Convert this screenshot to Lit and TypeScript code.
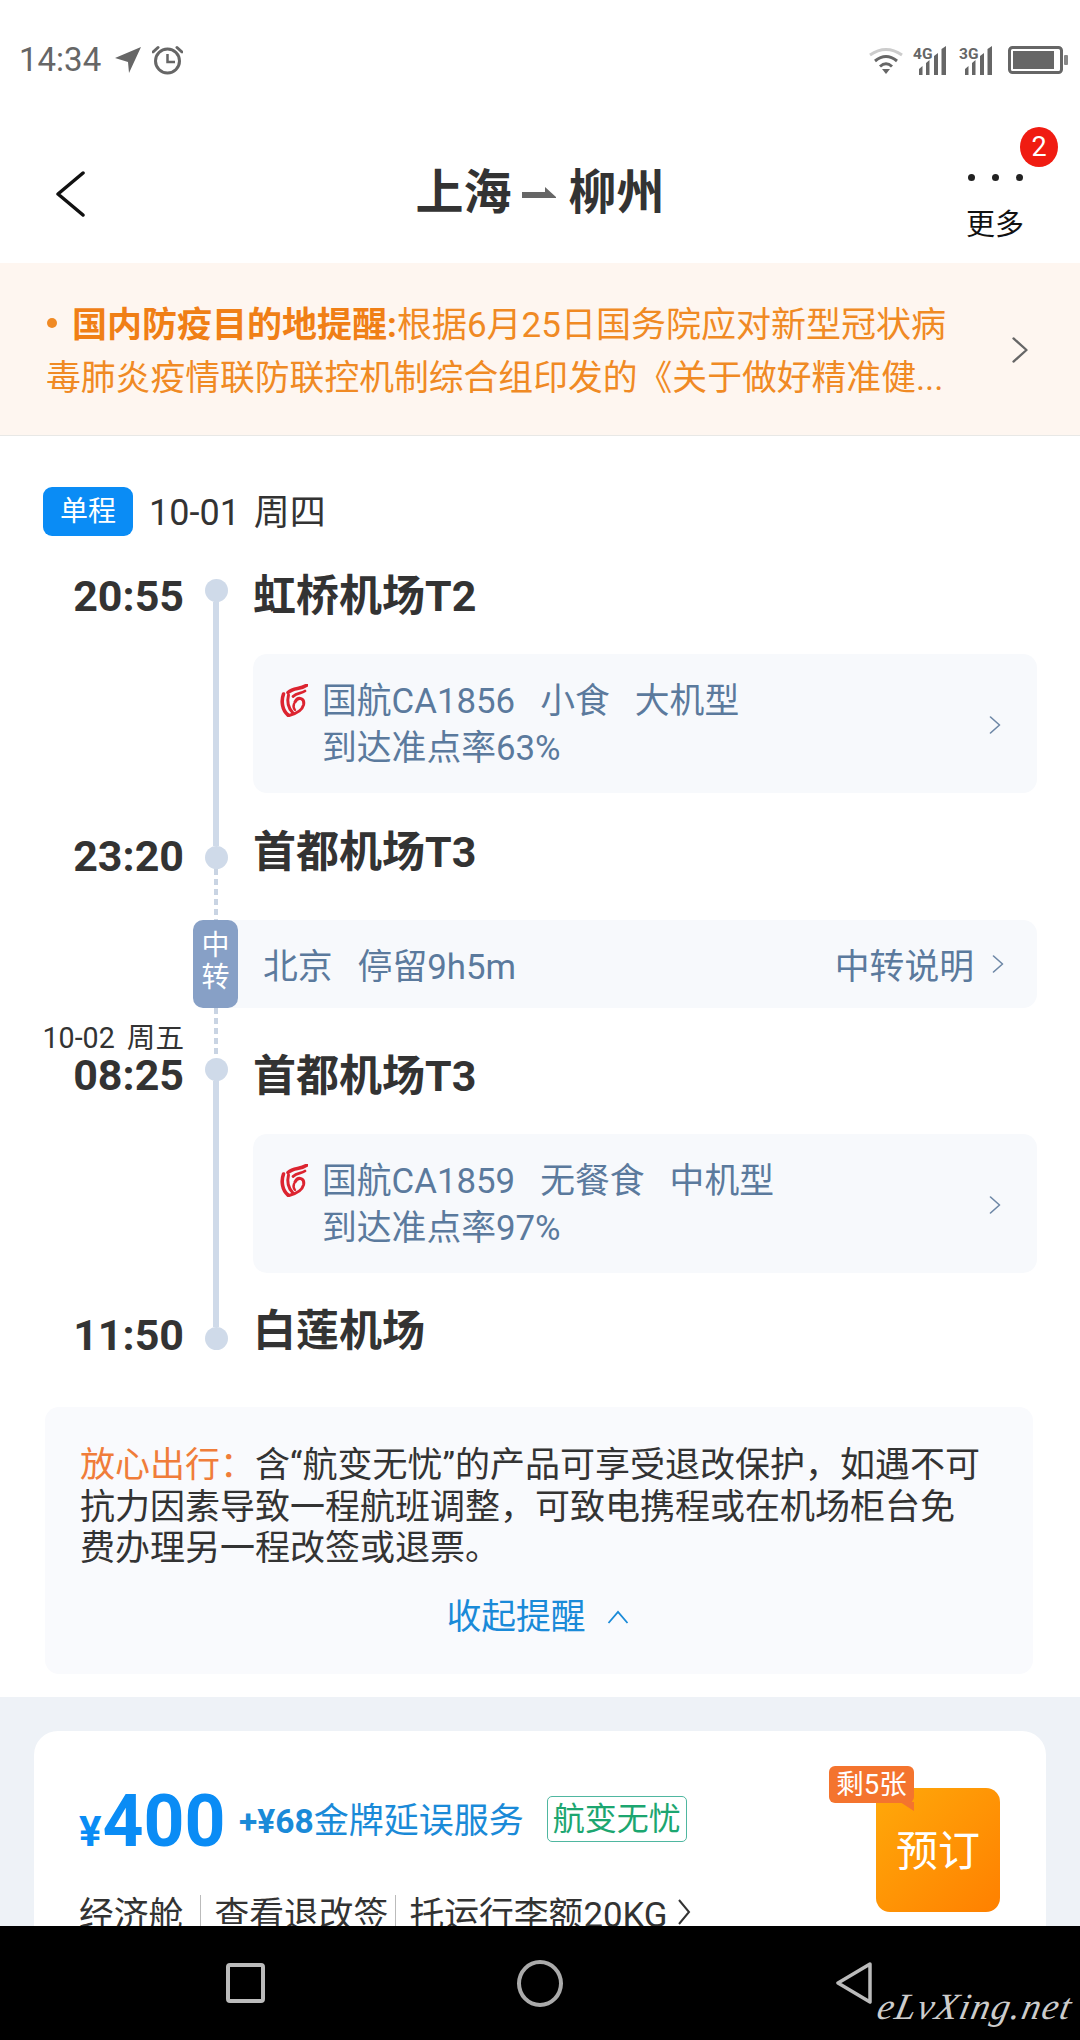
import { LitElement, html, css } from "lit";
import { customElement } from "lit/decorators.js";

const chev = (cls: string) => html`<svg class="chev ${cls}" viewBox="0 0 12 18"><path d="M1.5 1 L10.5 9 L1.5 17" fill="none" stroke="currentColor" stroke-width="1.6" stroke-linecap="round" stroke-linejoin="round"/></svg>`;

const logo = html`<svg class="logo" viewBox="0 0 28 33">
  <g fill="none" stroke="#dc2430" stroke-linecap="round">
    <path d="M3.500 10 C1 17 2 26 8 31" stroke-width="3.600"/>
    <path d="M8.500 11 C7 17 8 24 13 29" stroke-width="3"/>
    <path d="M8 8.500 C14 3 20 6 27 1" stroke-width="3.600"/>
    <path d="M13 12.500 C17 8 21 10 25 7" stroke-width="2.800"/>
    <path d="M15 18 C18 12 25 14 23.500 21 C22 27 15 30 9 31.500" stroke-width="3"/>
    <path d="M14 20 C13 23 14 25 15 26" stroke-width="2.400"/>
  </g></svg>`;

const signal = (t: string) => html`<svg class="sig" viewBox="0 0 34 29">
  <text x="0" y="13" class="sigt">${t}</text>
  <path d="M6 29V23L9.5 20V29ZM13 29V17L16.5 14V29ZM21 29V10L25 7V29ZM28.500 29V3L33 0V29Z" fill="#666"/></svg>`;

interface Stop { cls: string; time: string; name: string; date?: string; }
interface Flight { no: string; tags: string[]; rate: string; }

@customElement("app-root")
export class AppRoot extends LitElement {
  static styles = css`
    :host { display: block; width: 1080px; height: 2040px; overflow: hidden; font-family: Roboto, "Noto Sans CJK SC", sans-serif; color: #333; background: #fff; }
    .page { display: flex; flex-direction: column; height: 2040px; }
    svg { display: block; flex: none; }

    .status { height: 100px; flex: none; display: flex; align-items: center; padding: 20px 12px 0 19px; box-sizing: border-box; color: #666; }
    .clock { font-size: 33px; line-height: 40px; width: 96px; }
    .arrow { width: 26px; height: 26px; }
    .alarm { width: 31px; height: 30px; margin-left: 11px; }
    .status-r { margin-left: auto; display: flex; align-items: center; }
    .wifi { width: 34px; height: 27px; }
    .sig { width: 34px; height: 29px; margin-left: 10px; }
    .sig + .sig { margin-left: 12px; }
    .sigt { font: 700 15.500px Roboto, sans-serif; fill: #666; }
    .batt { width: 60px; height: 28px; margin-left: 15px; }

    .nav { height: 163px; flex: none; display: grid; grid-template-columns: 1fr auto 1fr; align-items: start; }
    .back { width: 30px; height: 46px; margin: 71px 0 0 56px; }
    .title { display: flex; align-items: center; margin-top: 68px; font-size: 48px; line-height: 50px; font-weight: 700; color: #333; }
    .t-arrow { width: 34px; height: 12px; margin: 0 13px 0 10px; }
    .more { justify-self: end; margin: 74px 56px 0 0; display: flex; flex-direction: column; align-items: center; position: relative; width: 58px; }
    .dots { display: flex; gap: 17px; }
    .dots i { width: 7px; height: 7px; border-radius: 50%; background: #222; }
    .more-t { font-size: 29px; line-height: 34px; color: #111; margin-top: 27px; }
    .badge { position: absolute; top: -47px; left: 54px; width: 38px; height: 40px; border-radius: 50%; background: #f01c12; color: #fff; font-size: 27px; line-height: 40px; text-align: center; }

    .banner { height: 173px; flex: none; box-sizing: border-box; background: #fef6f0; border-bottom: 1px solid #e8e8e6; display: flex; padding: 37px 0 0 46px; color: #f08a24; font-size: 35px; line-height: 52px; align-items: flex-start; }
    .banner-txt { width: 945px; }
    .banner-l { white-space: nowrap; }
    .banner-l.l2 { font-size: 34.800px; }
    .bul { display: inline-block; width: 10px; height: 10px; border-radius: 50%; background: #f08a24; margin: 0 15px 9px 1px; vertical-align: middle; }
    .banner b { font-weight: 700; color: #f07f16; }
    .banner .chev { width: 18px; height: 26px; color: #666; margin: 37px 0 0 20px; }

    .main { height: 1261px; flex: none; box-sizing: border-box; padding-top: 51px; }
    .date { display: flex; align-items: center; padding-left: 43px; height: 49px; font-size: 36px; color: #333; word-spacing: 5px; }
    .date-t { margin-top: -5px; }
    .tag { width: 90px; height: 49px; border-radius: 9px; background: #0a8cf5; color: #fff; font-size: 28px; line-height: 49px; text-align: center; margin-right: 16px; }
    .gap { height: 39px; }

    .row { display: grid; grid-template-columns: 184px 64px 1fr; margin-right: 43px; }
    .time-c { text-align: right; display: flex; flex-direction: column; align-items: flex-end; }
    .time { font-size: 43px; line-height: 44px; font-weight: 700; color: #333; }
    .sub { font-size: 28.600px; line-height: 30px; color: #333; white-space: nowrap; word-spacing: 5px; }
    .rail { display: flex; flex-direction: column; align-items: center; }
    .dot { width: 23px; height: 23px; border-radius: 50%; background: #cfdae9; flex: none; }
    .ln { width: 6px; flex: 1; background: #cfdae9; min-height: 0; }
    .dash { width: 4px; flex: 1; background: repeating-linear-gradient(#c9d4e3 0 6px, transparent 6px 10px); }
    .name { font-size: 43px; line-height: 48px; font-weight: 700; color: #333; padding-left: 5px; white-space: nowrap; }

    .a { height: 79px; } .a .time { margin-top: -1px; } .a .rail { padding-top: 4px; } .a .name { margin-top: -3px; }
    .c { height: 127px; } .c .time-c { padding-top: 41px; } .c .ln { flex: none; height: 53px; } .c .name { margin-top: 35px; }
    .e { height: 126px; } .e .sub { margin-top: 15px; } .e .dash { flex: none; height: 50px; } .e .name { margin-top: 44px; }
    .g { height: 87px; } .g .time-c { padding-top: 40px; } .g .ln { flex: none; height: 54px; } .g .name { margin-top: 34px; }

    .leg { height: 139px; }
    .card { margin-left: 5px; background: #f7f9fc; border-radius: 14px; display: flex; align-items: center; padding: 0 36px 0 27px; color: #5b7a9d; font-size: 34.800px; line-height: 47px; }
    .logo { width: 28px; height: 33px; margin: -47px 14px 0 0; }
    .card-t { flex: 1; padding-top: 3px; }
    .card-l { display: flex; gap: 25px; white-space: nowrap; }
    .card .chev { width: 12px; height: 18px; color: #6d87a6; margin-top: 3px; }

    .transit { display: flex; height: 88px; margin: 0 43px 0 193px; }
    .pill { position: relative; z-index: 1; width: 45px; flex: none; background: #87a0c6; border-radius: 10px; color: #fff; font-size: 28px; line-height: 32px; text-align: center; padding-top: 10px; box-sizing: border-box; }
    .bar { flex: 1; margin-left: -10px; padding: 0 33px 0 35px; background: #f7f9fc; border-radius: 0 14px 14px 0; display: flex; align-items: center; font-size: 34.800px; color: #5b7a9d; gap: 25px; }
    .bar .sp { margin-left: auto; }
    .bar .chev { width: 12px; height: 18px; margin-left: -7px; color: #6d87a6; }

    .note { margin: 47px 47px 0 45px; height: 267px; box-sizing: border-box; background: #f9fafd; border-radius: 14px; padding: 38px 48px 0 35px; font-size: 35px; line-height: 41.500px; color: #333; }
    .note em { font-style: normal; color: #f07d3a; }
    .fold { display: flex; justify-content: center; align-items: center; margin-top: 23px; color: #1a8ad8; padding-left: 10px; line-height: 48px; font-size: 34.800px; }
    .fold svg { width: 22px; height: 14px; margin-left: 21px; }

    .sale { flex: 1; min-height: 0; overflow: hidden; background: #eef2f7; padding-top: 34px; }
    .ticket { margin: 0 34px; height: 260px; background: #fff; border-radius: 24px 24px 0 0; display: flex; box-sizing: border-box; padding: 55px 46px 0 45px; }
    .t-l { flex: 1; min-width: 0; }
    .price-r { display: flex; align-items: center; height: 70px; white-space: nowrap; }
    .price { color: #0a8cf5; font-weight: 700; font-size: 71.500px; line-height: 70px; width: 160px; margin-top: 12px; }
    .price small { font-size: 42px; margin-right: 1px; }
    .svc { font-size: 35px; color: #1a8ad8; margin-top: -8px; }
    .svc b { font-size: 33.500px; }
    .pro { margin: -4px 0 0 23px; width: 140px; height: 46px; box-sizing: border-box; border: 1px solid #4fb7a0; border-radius: 5px; color: #1ca670; font-size: 32px; line-height: 44px; text-align: center; }
    .info { display: flex; align-items: center; height: 48px; margin-top: 32px; font-size: 34.800px; color: #333; white-space: nowrap; }
    .info i { width: 1px; height: 34px; background: #bbb; margin: 0 13px 0 17px; }
    .info i.n { margin: 0 13px 0 7px; }
    .info .chev { width: 14px; height: 28px; margin-left: 9px; color: #333; }
    .buy { position: relative; width: 124px; height: 124px; margin-top: 2px; flex: none; border-radius: 14px; background: linear-gradient(135deg, #ffa90a, #ff8000); color: #fff; font-size: 42px; line-height: 128px; text-align: center; }
    .left { position: absolute; left: -47px; top: -22px; width: 85px; height: 37px; background: #f4742e; border-radius: 6px; font-size: 27.500px; line-height: 37px; text-align: center; white-space: nowrap; }
    .left svg { position: absolute; right: 0; top: 36px; width: 14px; height: 9px; }

    .sys { height: 114px; flex: none; background: #000; display: flex; align-items: center; padding-left: 226px; position: relative; }
    .sq { width: 39px; height: 40px; box-sizing: border-box; border: 4px solid #bbb; border-radius: 4px; }
    .ci { width: 46px; height: 47px; box-sizing: border-box; border: 4px solid #aaa; border-radius: 50%; margin-left: 252px; }
    .tri { width: 37px; height: 42px; margin-left: 272px; }
    .wm { position: absolute; left: 878px; top: 58px; color: #ccc; font: italic 37px/46px "Liberation Serif", serif; letter-spacing: 1.500px; white-space: nowrap; transform: skewX(-12deg); }
  `;

  private stop(s: Stop) {
    const rail = { a: html`<div class="dot"></div><div class="ln"></div>`,
      c: html`<div class="ln"></div><div class="dot"></div><div class="dash"></div>`,
      e: html`<div class="dash"></div><div class="dot"></div><div class="ln"></div>`,
      g: html`<div class="ln"></div><div class="dot"></div>` } as Record<string, unknown>;
    return html`<div class="row ${s.cls}">
      <div class="time-c">${s.date ? html`<div class="sub">${s.date}</div>` : ""}<div class="time">${s.time}</div></div>
      <div class="rail">${rail[s.cls]}</div>
      <div class="name">${s.name}</div>
    </div>`;
  }

  private leg(f: Flight) {
    return html`<div class="row leg">
      <div></div><div class="rail"><div class="ln"></div></div>
      <div class="card">${logo}
        <div class="card-t"><div class="card-l"><span>${f.no}</span>${f.tags.map((t) => html`<span>${t}</span>`)}</div><div>${f.rate}</div></div>
        ${chev("")}
      </div>
    </div>`;
  }

  render() {
    return html`<div class="page">
      <div class="status">
        <span class="clock">14:34</span>
        <svg class="arrow" viewBox="0 0 26 26"><path d="M26 0 L0 11 L13 15 L14 26Z" fill="#666"/></svg>
        <svg class="alarm" viewBox="0 0 31 30"><g fill="none" stroke="#666" stroke-width="3"><circle cx="15.500" cy="16" r="12"/><path d="M15.500 9V17H23" stroke-width="2.500"/><path d="M1 7 L6 2.500M30 7 L25 2.500" stroke-linecap="round"/></g></svg>
        <div class="status-r">
          <svg class="wifi" viewBox="0 0 34 27"><g fill="none" stroke-width="3"><path d="M1 8 Q17 -3 33 8" stroke="#ccc"/><path d="M6 14 Q17 5 28 14" stroke="#666"/><path d="M11 19.500 Q17 14 23 19.500" stroke="#666"/></g><path d="M13 22H21L17 27Z" fill="#666"/></svg>
          ${signal("4G")}${signal("3G")}
          <svg class="batt" viewBox="0 0 60 28"><rect x="1.500" y="1.500" width="52" height="25" rx="3" fill="none" stroke="#666" stroke-width="3"/><rect x="5" y="5" width="41" height="18" fill="#666"/><rect x="56" y="9" width="4" height="10" rx="1" fill="#888"/></svg>
        </div>
      </div>

      <div class="nav">
        <svg class="back" viewBox="0 0 30 46"><path d="M27 2 L2 23 L27 44" fill="none" stroke="#111" stroke-width="3.500" stroke-linecap="round" stroke-linejoin="round"/></svg>
        <div class="title"><span>上海</span><svg class="t-arrow" viewBox="0 0 34 12"><path d="M0 5H23L23 0L34 10V11H0Z" fill="#666"/></svg><span>柳州</span></div>
        <div class="more"><span class="badge">2</span><div class="dots"><i></i><i></i><i></i></div><span class="more-t">更多</span></div>
      </div>

      <div class="banner">
        <div class="banner-txt">
          <div class="banner-l"><span class="bul"></span><b>国内防疫目的地提醒:</b>根据6月25日国务院应对新型冠状病</div>
          <div class="banner-l l2">毒肺炎疫情联防联控机制综合组印发的《关于做好精准健...</div>
        </div>
        ${chev("")}
      </div>

      <div class="main">
        <div class="date"><span class="tag">单程</span><span class="date-t">10-01 周四</span></div>
        <div class="gap"></div>
        ${this.stop({ cls: "a", time: "20:55", name: "虹桥机场T2" })}
        ${this.leg({ no: "国航CA1856", tags: ["小食", "大机型"], rate: "到达准点率63%" })}
        ${this.stop({ cls: "c", time: "23:20", name: "首都机场T3" })}
        <div class="transit">
          <div class="pill">中<br />转</div>
          <div class="bar"><span>北京</span><span>停留9h5m</span><span class="sp">中转说明</span>${chev("")}</div>
        </div>
        ${this.stop({ cls: "e", time: "08:25", name: "首都机场T3", date: "10-02 周五" })}
        ${this.leg({ no: "国航CA1859", tags: ["无餐食", "中机型"], rate: "到达准点率97%" })}
        ${this.stop({ cls: "g", time: "11:50", name: "白莲机场" })}
        <div class="note">
          <em>放心出行：</em>含“航变无忧”的产品可享受退改保护，如遇不可抗力因素导致一程航班调整，可致电携程或在机场柜台免费办理另一程改签或退票。
          <div class="fold">收起提醒<svg viewBox="0 0 22 14"><path d="M1.500 13 L11 2 L20.500 13" fill="none" stroke="currentColor" stroke-width="1.800"/></svg></div>
        </div>
      </div>

      <div class="sale">
        <div class="ticket">
          <div class="t-l">
            <div class="price-r">
              <div class="price"><small>¥</small>400</div>
              <div class="svc"><b>+¥68</b>金牌延误服务</div>
              <div class="pro">航变无忧</div>
            </div>
            <div class="info"><span>经济舱</span><i></i><span>查看退改签</span><i class="n"></i><span>托运行李额20KG</span>
              <svg class="chev" viewBox="0 0 14 28"><path d="M2 2 L12 14 L2 26" fill="none" stroke="currentColor" stroke-width="2"/></svg></div>
          </div>
          <div class="buy">预订<div class="left">剩5张<svg viewBox="0 0 14 9"><path d="M0 0H14V9Z" fill="#f4742e"/></svg></div></div>
        </div>
      </div>

      <div class="sys">
        <div class="sq"></div><div class="ci"></div>
        <svg class="tri" viewBox="0 0 37 42"><path d="M35 2 L3 21 L35 40Z" fill="none" stroke="#bbb" stroke-width="3.500" stroke-linejoin="round"/></svg>
        <span class="wm">eLvXing.net</span>
      </div>
    </div>`;
  }
}
